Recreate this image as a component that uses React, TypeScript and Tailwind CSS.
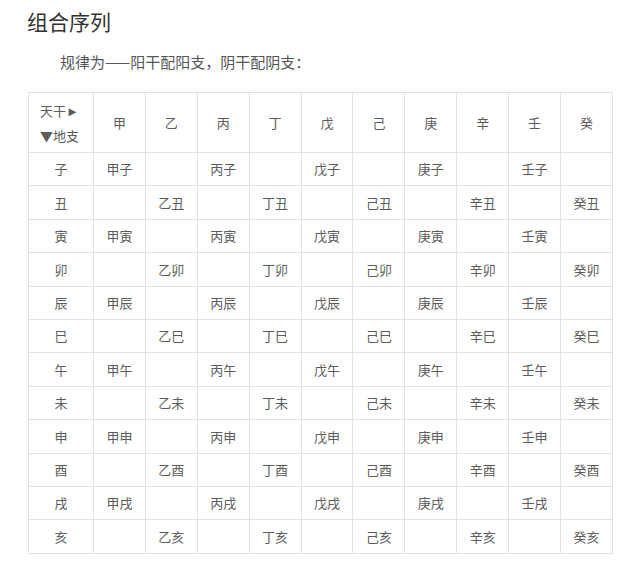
import React from 'react'

const stems = ['甲', '乙', '丙', '丁', '戊', '己', '庚', '辛', '壬', '癸']
const branches = ['子', '丑', '寅', '卯', '辰', '巳', '午', '未', '申', '酉', '戌', '亥']

const font = { fontFamily: '"Noto Sans CJK SC", "Liberation Sans", sans-serif' }

export default function App() {
  return (
    <div className="w-[640px] h-[584px] bg-white text-[#444]" style={font}>
      <h1 className="pl-[27px] pt-[7px] text-[21px] leading-[28px] font-normal text-[#333]">组合序列</h1>
      <p className="pl-[60px] mt-[16px] text-[15px] leading-[22px] text-[#555]">
        规律为——阳干配阳支，阴干配阴支：
      </p>
      <table className="ml-[28px] mt-[19px] w-[584px] table-fixed border-collapse text-[13px] text-[#5c5c5c]">
        <colgroup>
          <col className="w-[65px]" />
          {stems.map((s) => (
            <col key={s} className="w-[51.9px]" />
          ))}
        </colgroup>
        <thead>
          <tr className="h-[60px]">
            <th className="border border-[#e2e2e2] font-normal text-left pl-[11px] leading-[25px]">
              <div>天干►</div>
              <div>▼地支</div>
            </th>
            {stems.map((s) => (
              <th key={s} className="border border-[#e2e2e2] font-normal text-center">
                {s}
              </th>
            ))}
          </tr>
        </thead>
        <tbody>
          {branches.map((b, i) => (
            <tr key={b} className="h-[33.4px]">
              <td className="border border-[#e2e2e2] text-center">{b}</td>
              {stems.map((s, j) => (
                <td key={s} className="border border-[#e2e2e2] text-center">
                  {i % 2 === j % 2 ? s + b : ''}
                </td>
              ))}
            </tr>
          ))}
        </tbody>
      </table>
    </div>
  )
}
